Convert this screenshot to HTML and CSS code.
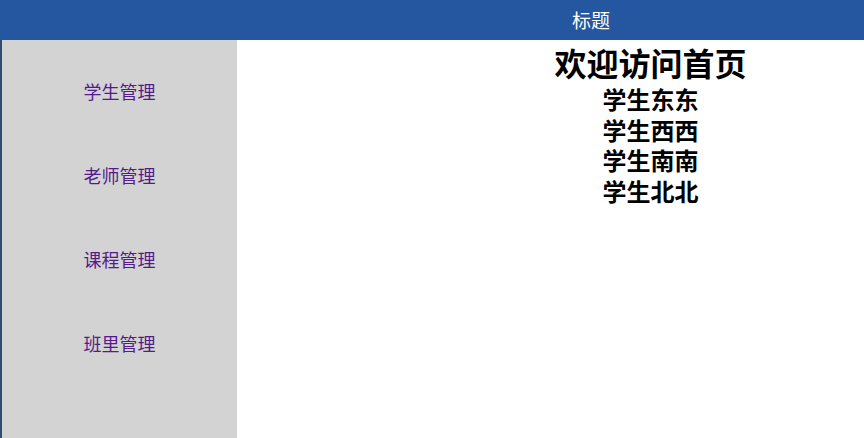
FILE: index.html
```html
<!DOCTYPE html>
<html lang="zh-CN">
<head>
<meta charset="utf-8">
<title>首页</title>
<link rel="stylesheet" href="styles.css">
</head>
<body>
<header class="topbar"><span class="title">标题</span></header>
<div class="layout">
  <nav class="sidebar">
    <a class="nav-link" href="#">学生管理</a>
    <a class="nav-link" href="#">老师管理</a>
    <a class="nav-link" href="#">课程管理</a>
    <a class="nav-link" href="#">班里管理</a>
  </nav>
  <main class="content">
    <h1 class="welcome">欢迎访问首页</h1>
    <ul class="students">
      <li>学生东东</li>
      <li>学生西西</li>
      <li>学生南南</li>
      <li>学生北北</li>
    </ul>
  </main>
</div>
</body>
</html>
```
FILE: styles.css
```css
html, body {
  margin: 0;
  padding: 0;
  height: 100%;
  overflow: hidden;
}
body {
  font-family: "Noto Sans CJK SC", "Noto Sans", sans-serif;
  background: #ffffff;
  display: flex;
  flex-direction: column;
}
.topbar {
  height: 40px;
  flex: none;
  background: #2457a0;
  display: flex;
  align-items: center;
  padding-left: 572px;
}
.title {
  color: #ffffff;
  font-size: 19px;
  line-height: 40px;
}
.layout {
  flex: 1;
  display: flex;
}
.sidebar {
  width: 235px;
  flex: none;
  background: #d3d3d3;
  border-left: 2px solid #2f4d6e;
  display: flex;
  flex-direction: column;
  align-items: center;
  padding-top: 39px;
  gap: 60px;
}
.nav-link {
  color: #551a8b;
  font-size: 18px;
  line-height: 24px;
  text-decoration: none;
}
.content {
  flex: 1;
  padding-left: 200px;
  text-align: center;
}
.welcome {
  margin: 0;
  font-size: 32px;
  font-weight: bold;
  line-height: 44px;
  padding-top: 0;
}
.students {
  list-style: none;
  margin: 0;
  padding: 0;
  font-size: 24px;
  font-weight: bold;
  line-height: 30.5px;
}
```
